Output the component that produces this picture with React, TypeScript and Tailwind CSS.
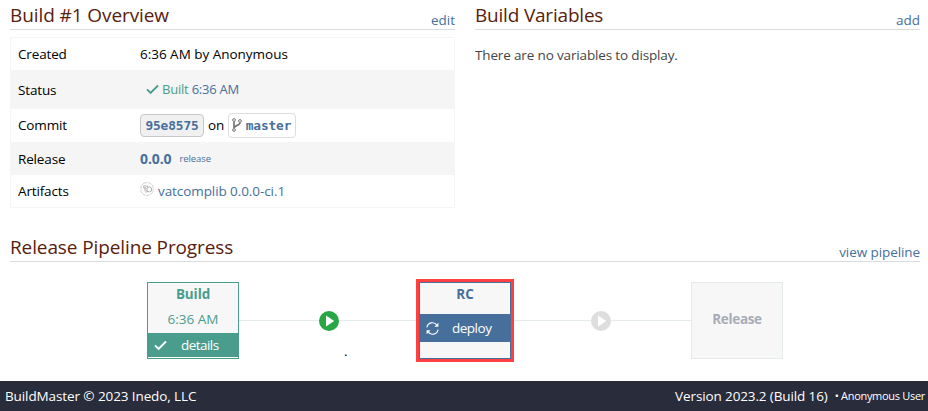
import type { ReactNode } from "react";

function SectionHeader({ title, action, spacing, actionSpacing = "" }: { title: string; action: string; spacing: string; actionSpacing?: string }) {
  return (
    <header className="flex h-[30px] items-end justify-between border-b border-[#d8dcdc]">
      <h2 className={`mb-[1px] text-[19px] leading-[26px] font-normal whitespace-nowrap text-[#5a200e] ${spacing}`}>{title}</h2>
      <a href="#" className={`mb-[-1px] text-[13.5px] leading-5 whitespace-nowrap text-[#476f9c] ${actionSpacing}`}>{action}</a>
    </header>
  );
}

function Row({ label, children, className }: { label: string; children: ReactNode; className: string }) {
  return (
    <div className={`flex items-center pl-[7px] ${className}`}>
      <div className="w-[122px] shrink-0 tracking-[-0.15px] text-black">{label}</div>
      <div className="flex items-center whitespace-nowrap">{children}</div>
    </div>
  );
}

function Check({ className }: { className: string }) {
  return (
    <svg className={className} width="13" height="11" viewBox="0 0 13 11" fill="none" stroke="currentColor" strokeWidth="1.9">
      <path d="M1 5.4 4.6 9 12 1.5" />
    </svg>
  );
}

function Branch() {
  return (
    <svg className="mb-[2px]" width="10" height="14" viewBox="0 0 10 14" fill="none" stroke="#777" strokeWidth="1">
      <circle cx="2" cy="2" r="1.4" />
      <circle cx="2" cy="12" r="1.4" />
      <circle cx="8" cy="3" r="1.4" />
      <path d="M2 3.5v7M8 4.5C8 8 2.4 6.8 2.2 10" strokeWidth="1.7" />
    </svg>
  );
}

function PackageIcon() {
  return (
    <svg className="mr-[4px] mb-[4px]" width="14" height="14" viewBox="0 0 14 14" fill="none" stroke="#c4c4c4" strokeWidth="0.8">
      <path d="M4 1.2 7 .5l3 .7L13 3.8v6.4l-3 2.6-3 .7-3-.7L1 10.2V3.8Z" strokeDasharray="3.5 .7" />
      <path d="M2.8 4.5 5 3.8l3 .7M5.2 5v4.5M7 6l2.2-1.2L11.4 6v3l-2.2 1L7 9ZM3.2 5.5l2 1M7.2 9 6 10.8" stroke="#999" />
    </svg>
  );
}

function Sync() {
  return (
    <svg className="ml-[6px]" width="13" height="13" viewBox="0 0 13 13" fill="none" stroke="currentColor" strokeWidth="1.1">
      <path d="M.9 5.4A5.5 5.5 0 0 1 11 3.4M12.1 7.6A5.5 5.5 0 0 1 2 9.6" />
      <path d="M12.4.8v4H8.4ZM.6 12.2v-4H4.6Z" fill="currentColor" stroke="none" />
    </svg>
  );
}

function Play({ className }: { className: string }) {
  return (
    <svg className={`shrink-0 ${className}`} width="20" height="20" viewBox="0 0 20 20">
      <circle cx="10" cy="10" r="10" fill="currentColor" />
      <path d="M7 4.5v11l8.2-5.5Z" fill="white" />
    </svg>
  );
}

function Line({ className }: { className: string }) {
  return <div className={`mb-px h-px bg-[#e5eaea] ${className}`} />;
}

export default function App() {
  return (
    <div className="flex h-[411px] w-[928px] flex-col overflow-hidden bg-white font-['Open_Sans','Noto_Sans',sans-serif] text-[13.5px]">
      <main className="h-[381px] pl-[10px]">
        <div className="flex h-[232px] gap-[20px]">
          <section className="w-[445px]">
            <SectionHeader title="Build #1 Overview" action="edit" spacing="tracking-[-0.09px]" />
            <div className="mt-[7px] flex h-[171px] flex-col border border-[#f5f5f5] tracking-[-0.1px]">
              <Row label="Created" className="h-[32px]">
                <span className="tracking-[-0.02px] text-black">6:36 AM by Anonymous</span>
              </Row>
              <Row label="Status" className="h-[39px] bg-[#f5f5f5] pt-px">
                <Check className="mr-[3px] mb-[2px] ml-[6px] text-[#4a9d8d]" />
                <span className="text-[13px] tracking-[-0.22px] text-[#4a9d8d]">Built <a href="#" className="text-[#476f9c]">6:36 AM</a></span>
              </Row>
              <Row label="Commit" className="h-[33px]">
                <code className="flex h-[23px] w-[64px] items-center justify-center rounded-[4px] border border-[#c8c8c8] bg-[#f0f0f0] font-['DejaVu_Sans_Mono',monospace] text-[12.8px] font-bold text-[#476f9c]">95e8575</code>
                <span className="mr-[4px] ml-[4px] text-black">on</span>
                <code className="flex h-[25px] w-[68px] items-center gap-[3.5px] rounded-[4px] border border-[#ddd] bg-white pl-[3px] font-['DejaVu_Sans_Mono',monospace] text-[12.8px] font-bold text-[#476f9c]"><Branch />master</code>
              </Row>
              <Row label="Release" className="h-[33px] bg-[#f5f5f5] pt-px">
                <a href="#" className="mb-[2px] text-[14px] font-bold text-[#476f9c]">0.0.0</a>
                <span className="ml-[8px] text-[9.5px] text-[#476f9c]">release</span>
              </Row>
              <Row label="Artifacts" className="h-[32px]">
                <PackageIcon />
                <a href="#" className="tracking-[-0.08px] text-[#476f9c]">vatcomplib 0.0.0-ci.1</a>
              </Row>
            </div>
          </section>
          <section className="w-[445px]">
            <SectionHeader title="Build Variables" action="add" spacing="tracking-[-0.2px]" />
            <p className="mt-[15px] leading-5 tracking-[-0.15px] text-[#444]">There are no variables to display.</p>
          </section>
        </div>
        <section className="relative w-[910px]">
          <SectionHeader title="Release Pipeline Progress" action="view pipeline" spacing="tracking-[-0.11px]" actionSpacing="tracking-[-0.08px]" />
          <div className="mt-[17px] flex h-[83px] items-center pl-[137px]">
            <div className="flex h-[77px] w-[92px] flex-col border border-[#4a9d8d] bg-[#f7f7f7] text-center text-[#4a9d8d]">
              <strong className="h-[24px] leading-[23px] font-bold tracking-[-0.1px]">Build</strong>
              <span className="h-[26px] leading-[25px]">6:36 AM</span>
              <a href="#" className="flex h-[24px] items-center bg-[#4a9d8d] text-white">
                <Check className="ml-[6px]" />
                <span className="ml-[14px] tracking-[-0.55px]">details</span>
              </a>
              <div className="h-px bg-white" />
            </div>
            <Line className="w-[80px]" />
            <Play className="text-[#28a745]" />
            <Line className="w-[77px]" />
            <div className="h-[83px] w-[98px] border-3 border-[#ff4040]">
              <div className="flex h-[77px] flex-col border border-[#476f9c] bg-[#f7f7f7] text-center text-[#476f9c]">
                <strong className="h-[31px] leading-[23px] font-bold tracking-[0.1px]">RC</strong>
                <a href="#" className="flex h-[28px] items-center bg-[#476f9c] text-white">
                  <Sync />
                  <span className="ml-[13px] tracking-[-0.5px]">deploy</span>
                </a>
              </div>
            </div>
            <Line className="w-[77px]" />
            <Play className="text-[#dedede]" />
            <Line className="w-[80px]" />
            <div className="flex h-[77px] w-[92px] items-center justify-center border border-[#e5eaea] bg-[#f7f7f7] pb-[3px] font-bold tracking-[-0.35px] text-[#a7adb8]">Release</div>
          </div>
          <span className="absolute top-[109px] left-[334px] text-black">.</span>
        </section>
      </main>
      <footer className="flex h-[30px] items-center justify-between bg-[#292c3b] pr-[3px] pl-[5px] text-white">
        <span className="tracking-[-0.1px]">BuildMaster © 2023 Inedo, LLC</span>
        <div className="flex items-center">
          <span className="tracking-[-0.12px]">Version 2023.2 (Build 16)</span>
          <span className="ml-[7px] text-[11px] tracking-[-0.3px]">• Anonymous User</span>
        </div>
      </footer>
    </div>
  );
}
